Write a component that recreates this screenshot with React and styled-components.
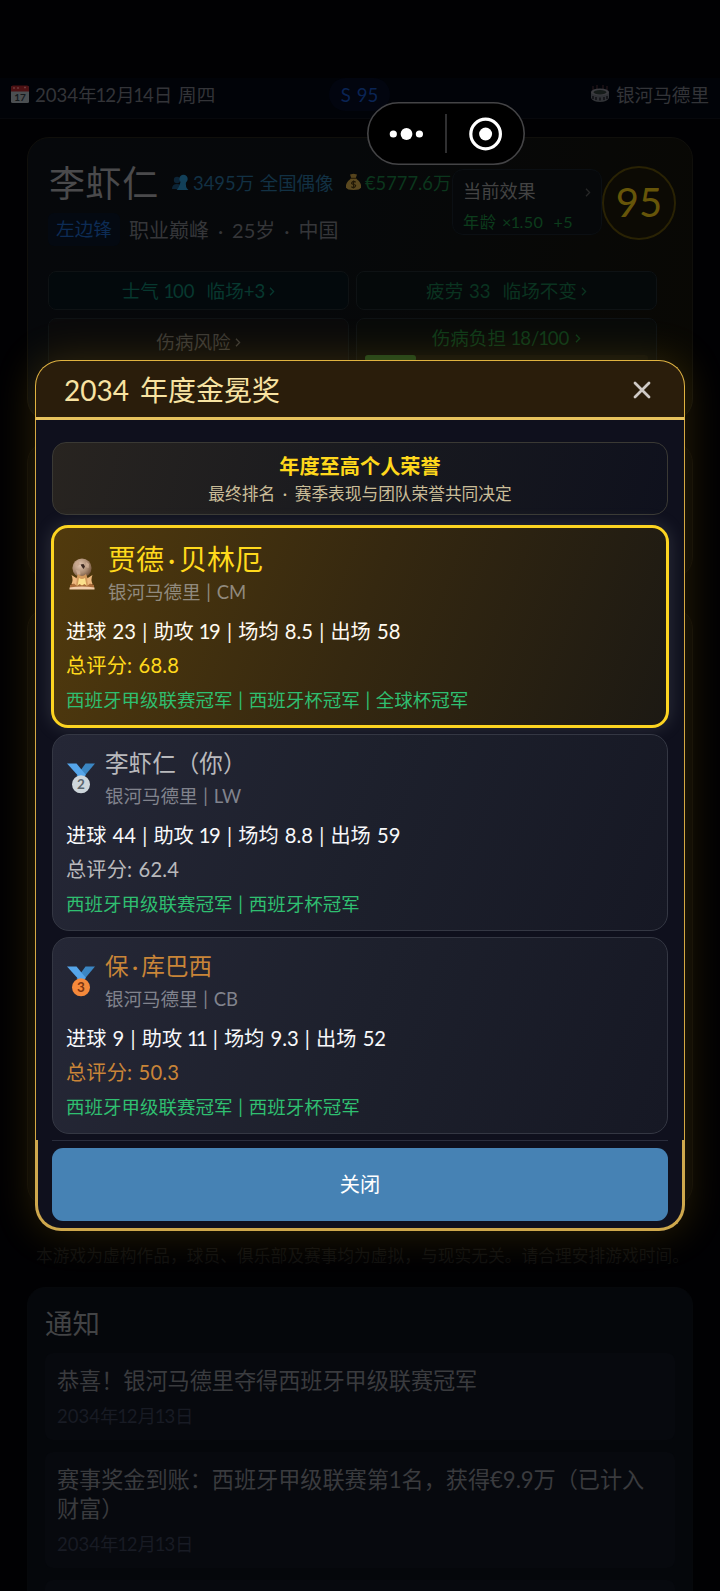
import React from 'react';
import styled, { createGlobalStyle } from 'styled-components';

const players = [
    {
        place: 1,
        name: '贾德·贝林厄',
        club: '银河马德里 | CM',
        stats: '进球 23 | 助攻 19 | 场均 8.5 | 出场 58',
        score: '68.8',
        titles: '西班牙甲级联赛冠军 | 西班牙杯冠军 | 全球杯冠军',
        color: '#ffd91c',
    },
    {
        place: 2,
        name: '李虾仁（你）',
        club: '银河马德里 | LW',
        stats: '进球 44 | 助攻 19 | 场均 8.8 | 出场 59',
        score: '62.4',
        titles: '西班牙甲级联赛冠军 | 西班牙杯冠军',
        color: '#b9b9bc',
    },
    {
        place: 3,
        name: '保·库巴西',
        club: '银河马德里 | CB',
        stats: '进球 9 | 助攻 11 | 场均 9.3 | 出场 52',
        score: '50.3',
        titles: '西班牙甲级联赛冠军 | 西班牙杯冠军',
        color: '#c98538',
    },
];

const notices = [
    { text: '恭喜！银河马德里夺得西班牙甲级联赛冠军', date: '2034年12月13日' },
    { text: '赛事奖金到账：西班牙甲级联赛第1名，获得€9.9万（已计入财富）', date: '2034年12月13日' },
];

// tightens the tabular "1" and gives the middle dot more room
const Label = ({ children }) => (
    <span>
        {children.split(/([1·])/).map((part, i) => {
            if (part === '1') return <One key={i}>1</One>
            if (part === '·') return <Dot key={i}>·</Dot>
            return part
        })}
    </span>
)

const CalendarIcon = () => (
    <svg width="20" height="20" viewBox="0 0 20 20">
        <rect x="1" y="2" width="18" height="17" rx="1.5" fill="#4b4f52" />
        <path d="M1 3.5Q1 1.5 3 1.5H17Q19 1.5 19 3.5V7.5H1Z" fill="#4d1113" />
        <path d="M3 4h2M7 4h2M14 3.5h2" stroke="#6b3a3b" strokeWidth="1.4" />
        <text x="10" y="17" fontSize="10" fontWeight="700" fontFamily="Lato" textAnchor="middle" fill="#15191c">17</text>
    </svg>
)

const StadiumIcon = () => (
    <svg width="20" height="20" viewBox="0 0 20 20">
        <path d="M3 6V2M7 5V1M13 5V1M17 6V2" stroke="#2d1a1c" strokeWidth="1" />
        <path d="M1 8V14Q3 18 10 18T19 14V8Z" fill="#303236" />
        <ellipse cx="10" cy="8" rx="9" ry="3.6" fill="#3c3c40" />
        <ellipse cx="10" cy="8.2" rx="6.5" ry="2.2" fill="#151b19" />
        <path d="M3 12v3M6 13v3M10 13.5v3M14 13v3M17 12v3" stroke="#0d0e12" strokeWidth="1.4" />
    </svg>
)

const FansIcon = () => (
    <svg width="17" height="17" viewBox="0 0 17 17">
        <circle cx="5" cy="6" r="3.2" fill="#0c2436" />
        <path d="M0 15Q0 10 5 10T9 15Z" fill="#0c2436" />
        <circle cx="11.5" cy="5" r="4.2" fill="#124059" />
        <path d="M4.5 16Q7 14 8.5 8H14Q13 13 16.5 16Z" fill="#124059" />
    </svg>
)

const MoneyIcon = () => (
    <svg width="17" height="18" viewBox="0 0 17 18">
        <path d="M5 1.5L8.5 .8 12 1.5 10.8 5H6.2Z" fill="#55431c" />
        <path d="M6 5.5h5Q17 10 16 14.5 15 17 8.5 17T1 14.5Q0 10 6 5.5Z" fill="#5a481f" />
        <path d="M5.6 5.3h5.8" stroke="#2e2109" strokeWidth="1.3" />
        <path d="M10.7 9.2Q8.5 7.6 7 9.3T8.7 11.5 10 13.8 6.4 13.6M8.6 7.4v8" fill="none" stroke="#1f1706" strokeWidth="1.1" />
    </svg>
)

const TrophyIcon = () => (
    <svg width="26" height="32" viewBox="0 0 26 32">
        <defs>
            <radialGradient id="ball" cx=".4" cy=".35" r=".7">
                <stop offset="0" stopColor="#e3c6b0" />
                <stop offset=".6" stopColor="#a98a70" />
                <stop offset="1" stopColor="#6b4c36" />
            </radialGradient>
        </defs>
        <circle cx="13" cy="10" r="9.6" fill="url(#ball)" />
        <path d="M11.5 6.500l3-.5 1.500 2.500-1.500 2.500-1.500-2z" fill="#3a2820" />
        <path d="M6 5l3-2 2 3.5-3 2zM17 4l3 2-.5 4-3-1zM7 12l4 .5.5 4-3 .5z" fill="#c9a88f" />
        <path d="M9 16q4 4 8 0l1.5 4 2.5 9H5l2.5-9z" fill="#d39a5c" />
        <path d="M10 20q3 2 6 0l1.5 8h-9z" fill="#fbe08c" />
        <path d="M2.5 17l5.5 3.500-1 7-4.500-1.500q2-4.500 0-9zM23.500 17l-5.500 3.500 1 7 4.500-1.500q-2-4.500 0-9z" fill="#eeb87e" />
        <path d="M1 27l4-1.500 3 2.500 2.500-2 2.500 1.500 2.500-1.500 2.500 2 3-2.500 4 1.500v3H1z" fill="#a96c3a" />
        <path d="M.5 29.500q12.500-2 25 0v2H.5z" fill="#f2cdaa" />
    </svg>
)

const MedalIcon = ({ place }) => {
    const silver = place === 2
    return (
        <svg width="28" height="31" viewBox="0 0 28 31">
            <path d="M18.5 .5H28L17.5 13H9.5Z" fill="#3b86c3" />
            <path d="M0 .5H9.5L19 12 14 16Z" fill="#55a5ea" />
            <circle cx="14" cy="21.3" r="9" fill={silver ? '#ced6db' : '#f5893b'} />
            <text x="14" y="26" fontSize="13.5" fontWeight="700" fontFamily="Lato" textAnchor="middle" fill={silver ? '#5c676f' : '#7e3510'}>
                {place}
            </text>
        </svg>
    )
}

const Capsule = () => (
    <CapsuleBox>
        <svg width="158" height="63" viewBox="0 0 158 63">
            <rect x=".8" y=".8" width="156.4" height="61.4" rx="30.7" fill="#000" stroke="#444446" strokeWidth="1.6" />
            <circle cx="26.3" cy="32" r="3.6" fill="#fff" />
            <circle cx="39.5" cy="32" r="5.9" fill="#fff" />
            <circle cx="52.4" cy="32" r="3.6" fill="#fff" />
            <path d="M79 12V51" stroke="#3c3c3e" strokeWidth="1.6" />
            <circle cx="118.6" cy="32" r="14.8" fill="none" stroke="#fff" strokeWidth="3.2" />
            <circle cx="118.6" cy="32" r="6.5" fill="#fff" />
        </svg>
    </CapsuleBox>
)

const Chevron = () => (
    <ChevronIcon width="6" height="9" viewBox="0 0 6 9">
        <path d="M1 .8L4.6 4.5 1 8.2" fill="none" stroke="currentColor" strokeWidth="1.3" />
    </ChevronIcon>
)

const Header = () => (
    <TopBar>
        <TopDate>
            <CalendarIcon />
            <Label>2034年12月14日 周四</Label>
        </TopDate>
        <SeasonPill>S 95</SeasonPill>
        <TopClub>
            <StadiumIcon />
            银河马德里
        </TopClub>
    </TopBar>
)

const Profile = () => (
    <ProfileCard>
        <ProfileTop>
            <div>
                <NameRow>
                    <PlayerName>李虾仁</PlayerName>
                    <Fans><FansIcon />3495万 全国偶像</Fans>
                    <Money><MoneyIcon />€5777.6万</Money>
                </NameRow>
                <InfoRow>
                    <PositionBadge>左边锋</PositionBadge>
                    <InfoText><Label>职业巅峰 · 25岁 · 中国</Label></InfoText>
                </InfoRow>
            </div>
            <EffectBox>
                <EffectTitle>当前效果<Chevron /></EffectTitle>
                <EffectValue><Label>年龄 ×1.50</Label><span>+5</span></EffectValue>
            </EffectBox>
            <Rating>95</Rating>
        </ProfileTop>
        <StatusGrid>
            <StatusButton $color="#07382f" $bg="#03090c"><Label>士气 100</Label><Gap />临场+3<Chevron /></StatusButton>
            <StatusButton $color="#0a3320" $bg="#05090a"><span>疲劳 33</span><Gap />临场不变<Chevron /></StatusButton>
            <StatusButton $color="#3a3835" $bg="#0a0a0b" $tall>伤病风险<Chevron /></StatusButton>
            <LoadButton $color="#0d3819" $bg="#080a09" $tall>
                <LoadText><Label>伤病负担 18/100</Label><Chevron /></LoadText>
                <LoadBar><LoadFill style={{ width: 18 + '%' }} /></LoadBar>
            </LoadButton>
        </StatusGrid>
    </ProfileCard>
)

const PlayerCard = ({ player }) => {
    const first = player.place === 1
    return (
        <Card $first={first}>
            <CardHead $first={first}>
                {first ? <TrophyIcon /> : <MedalIcon place={player.place} />}
                <div>
                    <CardName $first={first} $color={player.color}><Label>{player.name}</Label></CardName>
                    <CardClub $first={first}>{player.club}</CardClub>
                </div>
            </CardHead>
            <CardStats $first={first}><Label>{player.stats}</Label></CardStats>
            <CardScore $color={player.color}>总评分: {player.score}</CardScore>
            <CardTitles>{player.titles}</CardTitles>
        </Card>
    )
}

const AwardModal = () => (
    <Overlay>
        <Modal>
            <ModalHeader>
                <ModalTitle>2034 年度金冕奖</ModalTitle>
                <svg width="18" height="18" viewBox="0 0 18 18">
                    <path d="M2 2L16 16M16 2L2 16" stroke="#cfcac6" strokeWidth="2.8" strokeLinecap="round" />
                </svg>
            </ModalHeader>
            <ModalBody>
                <Banner>
                    <BannerTitle>年度至高个人荣誉</BannerTitle>
                    <BannerText><Label>最终排名 · 赛季表现与团队荣誉共同决定</Label></BannerText>
                </Banner>
                {players.map((player) => <PlayerCard key={player.place} player={player} />)}
            </ModalBody>
            <ModalFooter>
                <FooterLine />
                <CloseButton>关闭</CloseButton>
            </ModalFooter>
        </Modal>
    </Overlay>
)

const App = () => {
    return (
        <Page>
            <GlobalStyle />
            <Header />
            <Profile />
            <EmptyPanel $height="138px" />
            <EmptyPanel $height="600px" />
            <Disclaimer>本游戏为虚构作品，球员、俱乐部及赛事均为虚拟，与现实无关。请合理安排游戏时间。</Disclaimer>
            <Notices>
                <NoticesTitle>通知</NoticesTitle>
                {notices.map((notice) => (
                    <Notice key={notice.text}>
                        <NoticeText>{notice.text}</NoticeText>
                        <NoticeDate><Label>{notice.date}</Label></NoticeDate>
                    </Notice>
                ))}
                <Notice />
            </Notices>
            <AwardModal />
            <Capsule />
        </Page>
    )
}

const GlobalStyle = createGlobalStyle`
    *{
        box-sizing:border-box;
    }
    body{
        margin:0;
        background:#000002;
    }
    svg{
        display:block;
        flex-shrink:0;
    }
`

const One = styled.span`
    margin:0 -.065em;
`

const Dot = styled.span`
    margin:0 .14em;
`

const ChevronIcon = styled.svg`
    margin-top:4px;
`

const Page = styled.div`
    position:relative;
    width:720px;
    height:1591px;
    overflow:hidden;
    padding-top:78px;
    background:#010103;
    font-family:Lato, "Noto Sans CJK SC", sans-serif;
    font-size:18.6px;
    word-spacing:.055em;
    white-space:nowrap;
`

const TopBar = styled.div`
    display:flex;
    justify-content:space-between;
    align-items:center;
    height:41px;
    padding:0 11px 7px 10px;
    background:#010308;
    border-bottom:1px solid #07080c;
    color:#333438;
`

const TopDate = styled.div`
    display:flex;
    align-items:center;
    gap:5px;
    width:260px;
    padding-bottom:2px;
`

const SeasonPill = styled.div`
    width:61px;
    height:33px;
    line-height:34px;
    border-radius:17px;
    text-align:center;
    background:#02050f;
    color:#0a2454;
`

const TopClub = styled.div`
    display:flex;
    align-items:center;
    justify-content:flex-end;
    gap:6px;
    width:260px;
    padding-bottom:2px;
`

const ProfileCard = styled.div`
    height:284px;
    margin:18px 27px 0;
    padding:19px 15px 0 20px;
    border:1px solid #100f0b;
    border-radius:22px;
    background:linear-gradient(100deg, #06080b 0%, #06080a 45%, #090804 100%);
    overflow:hidden;
`

const ProfileTop = styled.div`
    display:grid;
    grid-template-columns:404px 150px 74px;
`

const NameRow = styled.div`
    display:flex;
    align-items:center;
    height:50px;
    padding-left:1px;
`

const PlayerName = styled.div`
    width:123px;
    padding-bottom:2px;
    font-size:36px;
    letter-spacing:.6px;
    color:#4a4a4c;
`

const Fans = styled.div`
    display:flex;
    align-items:center;
    gap:4px;
    width:173px;
    font-size:18.4px;
    color:#123144;
`

const Money = styled.div`
    display:flex;
    align-items:center;
    gap:3px;
    font-size:18.3px;
    color:#0b371d;
`

const InfoRow = styled.div`
    display:flex;
    align-items:center;
    gap:9px;
    height:32px;
    margin-top:6px;
`

const PositionBadge = styled.div`
    width:72px;
    line-height:33px;
    border-radius:6px;
    text-align:center;
    background:#040911;
    color:#0d2c55;
`

const InfoText = styled.div`
    font-size:20px;
    color:#353639;
`

const EffectBox = styled.div`
    height:66px;
    margin-top:12px;
    padding:4px 10px 0 10px;
    border:1px solid #0b0f13;
    border-radius:11px;
    background:#06080a;
`

const EffectTitle = styled.div`
    display:flex;
    align-items:center;
    justify-content:space-between;
    height:32px;
    font-size:18.2px;
    color:#434343;

    svg{
        color:#262727;
    }
`

const EffectValue = styled.div`
    display:flex;
    gap:10px;
    line-height:31px;
    font-size:16.2px;
    letter-spacing:.45px;
    color:#0c3c1c;
`

const Rating = styled.div`
    width:74px;
    height:74px;
    margin-top:9px;
    border:2px solid #292204;
    border-radius:50%;
    background:#0c0a04;
    text-align:center;
    line-height:69px;
    font-size:40px;
    color:#665509;
`

const StatusGrid = styled.div`
    display:grid;
    grid-template-columns:301px 301px;
    grid-template-rows:39px 60px;
    gap:8px 7px;
    margin-top:26px;
`

const StatusButton = styled.div`
    display:flex;
    justify-content:center;
    align-items:center;
    gap:4px;
    padding-bottom:${({ $tall }) => ($tall ? '15px' : '2px')};
    border:1px solid #0e1214;
    border-radius:8px;
    background:${({ $bg }) => $bg};
    color:${({ $color }) => $color};
`

const Gap = styled.div`
    width:4px;
`

const LoadButton = styled(StatusButton)`
    flex-direction:column;
    justify-content:flex-start;
    padding:0 8px;
`

const LoadText = styled.div`
    display:flex;
    align-items:center;
    gap:6px;
    height:35px;
`

const LoadBar = styled.div`
    width:100%;
    height:7px;
    flex-shrink:0;
    margin-top:-3px;
    border-radius:3px;
    background:#0e0f0b;
`

const LoadFill = styled.div`
    height:7px;
    border-radius:3px;
    background:#1b401b;
`

const EmptyPanel = styled.div`
    height:${({ $height }) => $height};
    margin:20px 27px 28px;
    border:1px solid #0b0a08;
    border-radius:22px;
    background:#040405;

    & + &{
        margin:0 27px;
    }
`

const Disclaimer = styled.div`
    margin-top:36px;
    padding-left:5px;
    line-height:26px;
    text-align:center;
    font-size:16.7px;
    letter-spacing:.06px;
    color:#101010;
`

const Notices = styled.div`
    height:400px;
    margin:18px 27px 0;
    padding:14px 17px 0;
    border:1px solid #06080b;
    border-radius:18px;
    background:#05070b;
`

const NoticesTitle = styled.div`
    height:51px;
    line-height:44px;
    font-size:27.5px;
    color:#424345;
`

const Notice = styled.div`
    min-height:80px;
    margin-bottom:12px;
    padding:13px 12px 10px;
    border-radius:8px;
    background:#07090e;
    white-space:normal;
`

const NoticeText = styled.div`
    line-height:29px;
    font-size:22.2px;
    letter-spacing:-.07px;
    color:#3a3b3e;
`

const NoticeDate = styled.div`
    margin-top:8px;
    line-height:27px;
    font-size:18.5px;
    color:#181b24;
`

const Overlay = styled.div`
    position:absolute;
    top:360px;
    left:0;
    right:0;
    display:flex;
    justify-content:center;
`

const Modal = styled.div`
    display:flex;
    flex-direction:column;
    width:650px;
    border-radius:26px;
    background:#0e101d;
    box-shadow:0 0 42px 1px rgba(255, 190, 20, .17);
`

const ModalHeader = styled.div`
    display:flex;
    justify-content:space-between;
    align-items:center;
    height:60px;
    padding:2px 33px 0 28px;
    border:1px solid #e0b340;
    border-bottom:3px solid #e8c35e;
    border-radius:26px 26px 0 0;
    background:#2a1d0b;
`

const ModalTitle = styled.div`
    padding-bottom:3px;
    font-size:28px;
    word-spacing:.14em;
    color:#f8e3a2;
`

const ModalBody = styled.div`
    display:flex;
    flex-direction:column;
    height:720px;
    padding:22px 16px 0;
    border:solid #d6a943;
    border-width:0 1px;
    background:#0f101d;
`

const Banner = styled.div`
    height:73px;
    margin-bottom:10px;
    padding-top:9px;
    border:1px solid #3a3934;
    border-radius:14px;
    background:linear-gradient(105deg, #282420, #191a1f 50%, #0f111d);
    text-align:center;
`

const BannerTitle = styled.div`
    line-height:28px;
    font-size:20.2px;
    font-weight:700;
    color:#ffd81c;
`

const BannerText = styled.div`
    line-height:29px;
    font-size:16.7px;
    color:#cabd98;
`

const Card = styled.div`
    height:${({ $first }) => ($first ? '204px' : '197.5px')};
    margin:${({ $first }) => ($first ? '0 -1px 5.5px' : '0 0 6px')};
    padding:${({ $first }) => ($first ? '0 12px' : '0 13px')};
    border:${({ $first }) => ($first ? '3px solid #fcd421' : '1px solid #343743')};
    border-radius:17px;
    background:${({ $first }) => ($first
        ? 'linear-gradient(110deg, #513a0d, #352810 50%, #1c1913)'
        : 'linear-gradient(110deg, #252736, #1d202c 50%, #161824)')};
    box-shadow:${({ $first }) => ($first ? '0 0 18px rgba(170, 180, 190, .2)' : 'none')};
`

const CardHead = styled.div`
    display:flex;
    align-items:center;
    gap:${({ $first }) => ($first ? '13px' : '10px')};
    height:${({ $first }) => ($first ? '87px' : '84px')};
    padding:${({ $first }) => ($first ? '8px 0 0 3px' : '6px 0 0 1px')};

    svg{
        margin-bottom:3px;
    }
`

const CardName = styled.div`
    line-height:34px;
    font-size:${({ $first }) => ($first ? '28px' : '23.6px')};
    color:${({ $color }) => $color};
`

const CardClub = styled.div`
    line-height:33px;
    font-size:18.5px;
    color:${({ $first }) => ($first ? '#918a7e' : '#81838d')};
`

const CardStats = styled.div`
    line-height:33px;
    font-size:20.2px;
    color:${({ $first }) => ($first ? '#fffaf0' : '#f7f8fa')};
`

const CardScore = styled.div`
    line-height:34px;
    font-size:20.2px;
    letter-spacing:.15px;
    color:${({ $color }) => $color};
`

const CardTitles = styled.div`
    line-height:36px;
    font-size:18.5px;
    color:#2fbf70;
`

const ModalFooter = styled.div`
    height:91px;
    padding:0 14px;
    border:3px solid #cfa84c;
    border-top:0;
    border-radius:0 0 26px 26px;
    background:#0f101d;
`

const FooterLine = styled.div`
    height:1px;
    background:#2a2d3c;
`

const CloseButton = styled.div`
    height:73px;
    margin-top:7px;
    border-radius:11px;
    background:#4682b4;
    text-align:center;
    line-height:73px;
    font-size:20.2px;
    color:#fff;
`

const CapsuleBox = styled.div`
    position:absolute;
    top:102px;
    left:367px;
`

export default App;
